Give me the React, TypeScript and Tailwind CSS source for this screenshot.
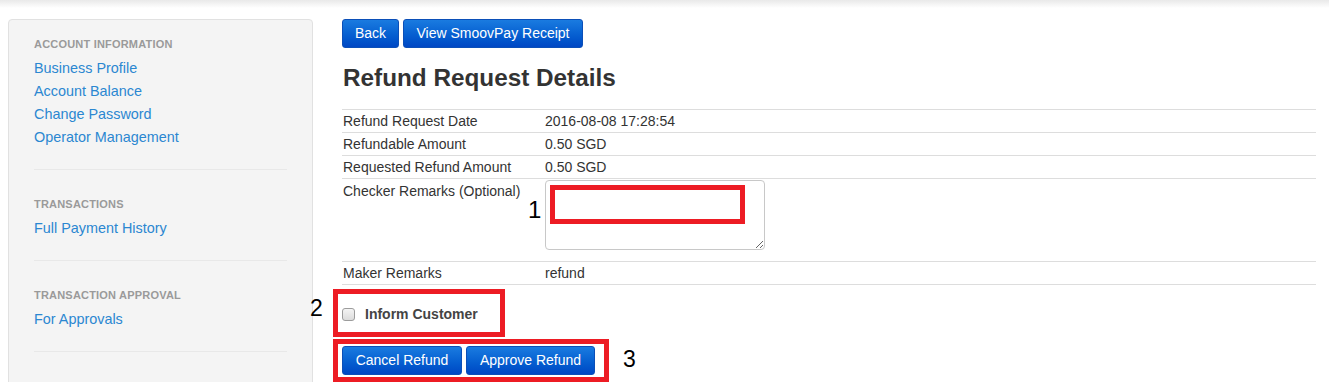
const sections = [
  {
    title: "Account Information",
    links: ["Business Profile", "Account Balance", "Change Password", "Operator Management"],
  },
  { title: "Transactions", links: ["Full Payment History"] },
  { title: "Transaction Approval", links: ["For Approvals"] },
  { title: "Withdrawal", links: ["Withdraw Funds"] },
]

const rows = [
  ["Refund Request Date", "2016-08-08 17:28:54"],
  ["Refundable Amount", "0.50 SGD"],
  ["Requested Refund Amount", "0.50 SGD"],
]

function BlueButton({ children, className = "" }: { children: React.ReactNode; className?: string }) {
  return (
    <button
      className={`inline-flex items-center justify-center rounded-[3px] border border-[#0b4fb8] bg-gradient-to-b from-[#1a7be0] to-[#0047c4] text-[14px] text-white ${className}`}
    >
      {children}
    </button>
  )
}

function Sidebar() {
  return (
    <aside className="w-[305px] shrink-0 self-start rounded-[4px] border border-[#e1e1e1] bg-[#f4f4f4] px-[25px] pt-[16px] pb-[40px]">
      {sections.map((s, i) => (
        <div key={s.title}>
          {i > 0 && <div className="mt-[20px] mb-[26px] h-px bg-[#e8e8e8]" />}
          <h3 className="text-[11px] font-bold uppercase leading-[16px] tracking-[0.2px] text-[#9a9a9a]">
            {s.title}
          </h3>
          <ul className="mt-[5px]">
            {s.links.map((l) => (
              <li key={l} className="text-[14.4px] leading-[23px] text-[#2b87d1]">
                {l}
              </li>
            ))}
          </ul>
        </div>
      ))}
    </aside>
  )
}

export default function App() {
  return (
    <div className="relative h-[382px] overflow-hidden bg-white font-['Liberation_Sans',Arial,sans-serif] text-[#333]">
      <div className="h-[8px] bg-gradient-to-b from-[#e9e9e9] to-white" />
      <div className="mt-[11px] flex pl-[8px] pr-[13px]">
        <Sidebar />

        <main className="ml-[29px] flex-1">
          <div className="flex gap-[4px]">
            <BlueButton className="h-[29px] w-[57px]">Back</BlueButton>
            <BlueButton className="h-[29px] w-[180px]">View SmoovPay Receipt</BlueButton>
          </div>

          <h1 className="mt-[15px] pl-[1px] text-[24.3px] font-bold leading-[30px] text-[#333]">
            Refund Request Details
          </h1>

          <div className="mt-[16px] border-b border-[#dddddd] text-[14px] leading-[20px]">
            {rows.map(([k, v]) => (
              <div key={k} className="grid grid-cols-[203px_1fr] border-t border-[#dddddd] py-[1px]">
                <div className="pl-[1px]">{k}</div>
                <div>{v}</div>
              </div>
            ))}
            <div className="grid grid-cols-[203px_1fr] border-t border-[#dddddd] py-[1px]">
              <div className="pl-[1px] pt-[1px]">Checker Remarks (Optional)</div>
              <div>
                <textarea className="mb-[10px] block h-[70px] w-[220px] rounded-[4px] border border-[#c8c8c8] bg-white" />
              </div>
            </div>
            <div className="grid grid-cols-[203px_1fr] border-t border-[#dddddd] py-[1px]">
              <div className="pl-[1px]">Maker Remarks</div>
              <div>refund</div>
            </div>
          </div>

          <label className="mt-[19px] flex items-center gap-[10px]">
            <span className="h-[13px] w-[13px] rounded-[3px] border border-[#9c9c9c] bg-gradient-to-b from-[#f4f4f4] to-[#dcdcdc]" />
            <span className="text-[14px] font-bold text-[#444]">Inform Customer</span>
          </label>

          <div className="mt-[21px] flex gap-[4px]">
            <BlueButton className="h-[29px] w-[120px]">Cancel Refund</BlueButton>
            <BlueButton className="h-[29px] w-[129px]">Approve Refund</BlueButton>
          </div>
        </main>
      </div>

      {/* annotation overlays */}
      <div className="absolute left-[550px] top-[185px] h-[39px] w-[195px] border-[5px] border-[#ed1c24]" />
      <span className="absolute left-[528px] top-[196px] text-[24px] leading-[28px] text-black">1</span>

      <div className="absolute left-[333px] top-[289px] h-[48px] w-[172px] border-[5px] border-[#ed1c24]" />
      <span className="absolute left-[310px] top-[294px] text-[23px] leading-[28px] text-black">2</span>

      <div className="absolute left-[333px] top-[339px] h-[43px] w-[276px] border-[5px] border-[#ed1c24]" />
      <span className="absolute left-[623px] top-[345px] text-[23px] leading-[28px] text-black">3</span>
    </div>
  )
}
